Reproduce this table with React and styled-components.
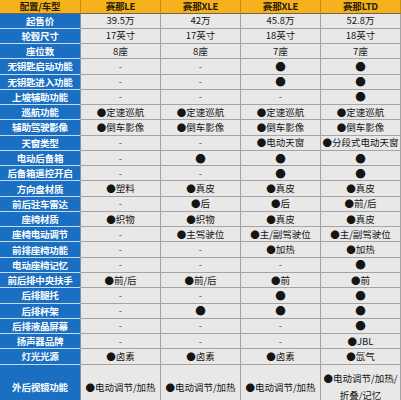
import React from "react";
import styled, { createGlobalStyle } from "styled-components";

const Global = createGlobalStyle`
  html, body { margin: 0; padding: 0; background: #ffffff; }
  body { width: 401px; height: 400px; overflow: hidden; }
`;

const Table = styled.div`
  display: grid;
  grid-template-columns: 81px 80px 80px 80px 80px;
  grid-template-rows: 13.5px repeat(23, 15.27px) 46px;
  width: 401px;
  font-family: "Noto Sans CJK SC", "Noto Sans", sans-serif;
  font-size: 9.5px;
`;

const BaseCell = styled.div`
  box-sizing: border-box;
  display: flex;
  align-items: center;
  justify-content: center;
  text-align: center;
  white-space: nowrap;
  overflow: hidden;
  border-right: 1px solid;
  border-bottom: 1px solid;
`;

const HeadCell = styled(BaseCell)`
  background: #f5b21c;
  color: #2b1c02;
  font-weight: 700;
  border-right-color: #c98d0c;
  border-bottom-color: #6e6450;
  letter-spacing: -0.2px;
`;

const LabelCell = styled(BaseCell)`
  background: #1b6fc3;
  color: #ffffff;
  font-weight: 700;
  border-right-color: #7d93ad;
  border-bottom-color: #c7dbf0;
  letter-spacing: -0.2px;
`;

const ValueCell = styled(BaseCell)`
  background: #e8e8e8;
  color: ${(p) => (p.$dash ? "#555" : "#151515")};
  border-right-color: #a4a4a4;
  border-bottom-color: #a4a4a4;
  flex-direction: column;
  line-height: 17px;
  font-size: ${(p) => (p.$dot ? "10.5px" : "9.5px")};
`;

const header = ["配置/车型", "赛那LE", "赛那XLE", "赛那XLE", "赛那LTD"];

const rows = [
  ["起售价", "39.5万", "42万", "45.8万", "52.8万"],
  ["轮毂尺寸", "17英寸", "17英寸", "18英寸", "18英寸"],
  ["座位数", "8座", "8座", "7座", "7座"],
  ["无钥匙启动功能", "-", "-", "●", "●"],
  ["无钥匙进入功能", "-", "-", "●", "●"],
  ["上坡辅助功能", "-", "-", "-", "●"],
  ["巡航功能", "●定速巡航", "●定速巡航", "●定速巡航", "●定速巡航"],
  ["辅助驾驶影像", "●倒车影像", "●倒车影像", "●倒车影像", "●倒车影像"],
  ["天窗类型", "-", "-", "●电动天窗", "●分段式电动天窗"],
  ["电动后备箱", "-", "●", "●", "●"],
  ["后备箱遥控开启", "-", "-", "●", "●"],
  ["方向盘材质", "●塑料", "●真皮", "●真皮", "●真皮"],
  ["前后驻车雷达", "-", "●后", "●后", "●前/后"],
  ["座椅材质", "●织物", "●织物", "●真皮", "●真皮"],
  ["座椅电动调节", "-", "●主驾驶位", "●主/副驾驶位", "●主/副驾驶位"],
  ["前排座椅功能", "-", "-", "●加热", "●加热"],
  ["电动座椅记忆", "-", "-", "-", "●"],
  ["前后排中央扶手", "●前/后", "●前/后", "●前", "●前"],
  ["后排腿托", "-", "-", "●", "●"],
  ["后排杯架", "-", "●", "●", "●"],
  ["后排液晶屏幕", "-", "-", "-", "●"],
  ["扬声器品牌", "-", "-", "-", "●JBL"],
  ["灯光光源", "●卤素", "●卤素", "●卤素", "●氙气"],
  [
    "外后视镜功能",
    "●电动调节/加热",
    "●电动调节/加热",
    "●电动调节/加热",
    ["●电动调节/加热/", "折叠/记忆"],
  ],
];

export default function App() {
  return (
    <>
      <Global />
      <Table>
        {header.map((h, i) => (
          <HeadCell key={"h" + i}>{h}</HeadCell>
        ))}
        {rows.map((r, ri) => (
          <React.Fragment key={"r" + ri}>
            <LabelCell>{r[0]}</LabelCell>
            {r.slice(1).map((v, ci) =>
              Array.isArray(v) ? (
                <ValueCell key={ci}>
                  {v.map((line, li) => (
                    <span key={li}>{line}</span>
                  ))}
                </ValueCell>
              ) : (
                <ValueCell key={ci} $dash={v === "-"} $dot={v === "●"}>
                  {v}
                </ValueCell>
              )
            )}
          </React.Fragment>
        ))}
      </Table>
    </>
  );
}
